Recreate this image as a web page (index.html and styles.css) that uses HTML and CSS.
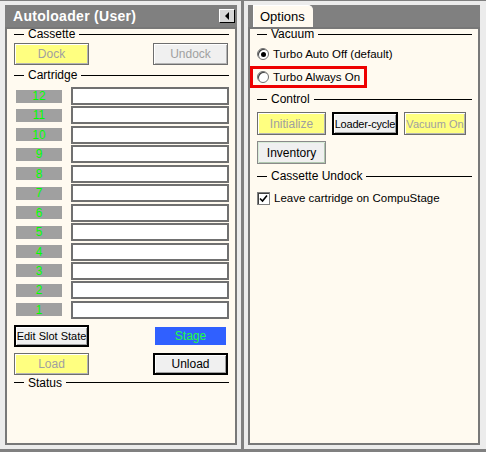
FILE: index.html
```html
<!DOCTYPE html>
<html lang="en">

<head>
    <meta charset="UTF-8">
    <meta name="viewport" content="width=device-width, initial-scale=1.0">
    <title>Autoloader</title>
    <link rel="stylesheet" href="styles.css">
</head>

<body>
    <div class="screen">
        <div class="pane pane-left">
            <div class="titlebar">
                <span class="title">Autoloader (User)</span>
                <span class="collapse">
                    <svg width="6" height="8" viewBox="0 0 6 8"><path d="M5 0 L1 4 L5 8 Z" fill="#000"/></svg>
                </span>
            </div>
            <div class="panel">
                <div class="group">Cassette</div>
                <div class="btn-row first">
                    <span class="btn yellow off w75">Dock</span>
                    <span class="btn off w75">Undock</span>
                </div>
                <div class="group gap4">Cartridge</div>
                <div class="slots">
                    <div class="slot"><span class="slot-num">12</span><span class="slot-field"></span></div>
                    <div class="slot"><span class="slot-num">11</span><span class="slot-field"></span></div>
                    <div class="slot"><span class="slot-num">10</span><span class="slot-field"></span></div>
                    <div class="slot"><span class="slot-num">9</span><span class="slot-field"></span></div>
                    <div class="slot"><span class="slot-num">8</span><span class="slot-field"></span></div>
                    <div class="slot"><span class="slot-num">7</span><span class="slot-field"></span></div>
                    <div class="slot"><span class="slot-num">6</span><span class="slot-field"></span></div>
                    <div class="slot"><span class="slot-num">5</span><span class="slot-field"></span></div>
                    <div class="slot"><span class="slot-num">4</span><span class="slot-field"></span></div>
                    <div class="slot"><span class="slot-num">3</span><span class="slot-field"></span></div>
                    <div class="slot"><span class="slot-num">2</span><span class="slot-field"></span></div>
                    <div class="slot"><span class="slot-num">1</span><span class="slot-field"></span></div>
                </div>
                <div class="btn-row gap6">
                    <span class="btn strong small w75">Edit Slot State</span>
                    <span class="stage">Stage</span>
                </div>
                <div class="btn-row gap6">
                    <span class="btn yellow off w75">Load</span>
                    <span class="btn strong w75">Unload</span>
                </div>
                <div class="group gap2">Status</div>
            </div>
        </div>

        <div class="pane pane-right">
            <div class="tabbar">
                <span class="tab">Options</span>
            </div>
            <div class="panel">
                <div class="group">Vacuum</div>
                <div class="option first-opt">
                    <span class="radio checked"></span>
                    <span>Turbo Auto Off (default)</span>
                </div>
                <div class="option marked">
                    <span class="radio"></span>
                    <span>Turbo Always On</span>
                </div>
                <div class="group gap5">Control</div>
                <div class="ctl-row">
                    <span class="btn yellow off w69">Initialize</span>
                    <span class="btn strong small tight w66">Loader-cycle</span>
                    <span class="btn yellow off small w62">Vacuum On</span>
                </div>
                <div class="ctl-row">
                    <span class="btn soft w69">Inventory</span>
                </div>
                <div class="group gap6">Cassette Undock</div>
                <div class="option check-opt">
                    <span class="check">
                        <svg width="11" height="11" viewBox="0 0 11 11"><path d="M2 5.5 L4.5 8 L9 2.5" fill="none" stroke="#000" stroke-width="1.6"/></svg>
                    </span>
                    <span>Leave cartridge on CompuStage</span>
                </div>
            </div>
        </div>
    </div>
</body>

</html>
```

FILE: styles.css
```css
* {
    margin: 0;
    padding: 0;
    box-sizing: border-box;
}

body {
    width: 486px;
    height: 452px;
    overflow: hidden;
    background-color: #808080;
    font-family: "Liberation Sans", Arial, sans-serif;
    font-size: 11px;
    color: #000;
}

.screen {
    display: flex;
    gap: 3px;
    height: 449px;
    padding-top: 1px;
}

.pane {
    display: flex;
    flex-direction: column;
    background-color: #ececec;
}

.pane-left {
    width: 241px;
    padding: 4px 4px 4px 5px;
}

.pane-right {
    flex: 1;
    padding: 4px 6px 4px 4px;
}

.titlebar {
    display: flex;
    align-items: center;
    justify-content: space-between;
    height: 22px;
    padding: 0 2px 0 8px;
    background-color: #808080;
}

.title {
    color: #fff;
    font-size: 14px;
    font-weight: bold;
    letter-spacing: 0.3px;
}

.collapse {
    display: flex;
    align-items: center;
    justify-content: center;
    width: 16px;
    height: 14px;
    background-color: #d8d8d8;
    border: 1px solid #000;
    border-top-color: #fff;
    border-left-color: #fff;
}

.tabbar {
    display: flex;
    align-items: flex-end;
    height: 22px;
    padding-left: 5px;
    background-color: #808080;
}

.tab {
    display: flex;
    align-items: center;
    height: 22px;
    width: 60px;
    padding-left: 6px;
    font-size: 13px;
    background-color: #fffaf0;
    border-top: 1px solid #fff;
    border-left: 1px solid #fff;
    border-top-right-radius: 5px;
}

.panel {
    flex: 1;
    display: flex;
    flex-direction: column;
    background-color: #fffaf0;
    border: 2px solid #787878;
    padding: 0 6px 0 7px;
}

.group {
    display: flex;
    align-items: center;
    gap: 4px;
    height: 12px;
    line-height: 12px;
    font-size: 12px;
    margin-top: -1px;
}

.group::before {
    content: "";
    width: 10px;
    height: 1px;
    background-color: #000;
}

.group::after {
    content: "";
    flex: 1;
    height: 1px;
    background-color: #000;
}

.gap2 { margin-top: 2px; }
.gap4 { margin-top: 4px; }
.gap5 { margin-top: 5px; }
.gap6 { margin-top: 6px; }

.btn-row {
    display: flex;
    justify-content: space-between;
    align-items: center;
    padding-right: 1px;
}

.btn-row.first { margin-top: 3px; }

.btn {
    display: flex;
    align-items: center;
    justify-content: center;
    height: 22px;
    font-size: 12px;
    white-space: nowrap;
    overflow: hidden;
    background-color: #f0f0f0;
    border: 1px solid #6e6e6e;
    box-shadow: inset 1px 1px #fff, inset -1px -1px #b4b4b4;
}

.w75 { width: 75px; }
.w69 { width: 69px; }
.w66 { width: 66px; }
.w62 { width: 62px; }

.btn.yellow {
    background-color: #ffff80;
}

.btn.off {
    color: #a0a0a0;
}

.btn.strong {
    border: 2px solid #000;
    box-shadow: inset 1px 1px #fff, inset -1px -1px #a0a0a0;
}

.btn.small {
    font-size: 11px;
}

.btn.tight {
    letter-spacing: -0.2px;
}

.btn.soft {
    border-color: #8a8a8a;
    box-shadow: inset 1px 1px #d8ecd8, inset -1px -1px #b0c8b0;
}

.stage {
    display: flex;
    align-items: center;
    justify-content: center;
    width: 71px;
    height: 18px;
    margin-right: 2px;
    font-size: 12px;
    color: #20ff40;
    background-color: #3060ff;
}

.slots {
    display: grid;
    grid-template-rows: repeat(12, 18px);
    row-gap: 1.45px;
    margin-top: 6px;
}

.slot {
    display: flex;
    align-items: center;
}

.slot-num {
    display: flex;
    align-items: center;
    justify-content: center;
    width: 46px;
    height: 13px;
    margin-left: 2px;
    font-size: 12px;
    color: #00ff00;
    background-color: #a0a0a0;
}

.slot-field {
    width: 158px;
    height: 18px;
    margin-left: 9px;
    background-color: #fff;
    border: 2px solid #707070;
}

.option {
    display: flex;
    align-items: center;
    gap: 4px;
    height: 14px;
    font-size: 11.5px;
}

.first-opt { margin-top: 7px; }

.option.marked {
    align-self: flex-start;
    height: 22px;
    margin: 5px 0 0 -7px;
    padding: 1px 4px;
    border: 3px solid #ee0000;
}

.radio {
    display: flex;
    align-items: center;
    justify-content: center;
    width: 12px;
    height: 12px;
    border-radius: 50%;
    background-color: #fff;
    border: 1px solid #707070;
    box-shadow: inset 1px 1px #404040;
}

.radio.checked::after {
    content: "";
    width: 5px;
    height: 5px;
    border-radius: 50%;
    background-color: #000;
}

.ctl-row {
    display: flex;
    gap: 6px;
    margin-top: 6px;
}

.ctl-row .btn {
    height: 23px;
}

.group.gap5 + .ctl-row {
    margin-top: 7px;
}

.check-opt { margin-top: 9px; }

.check {
    display: flex;
    align-items: center;
    justify-content: center;
    width: 13px;
    height: 13px;
    background-color: #fff;
    border: 1px solid #808080;
    box-shadow: inset 1px 1px #404040;
}
```
